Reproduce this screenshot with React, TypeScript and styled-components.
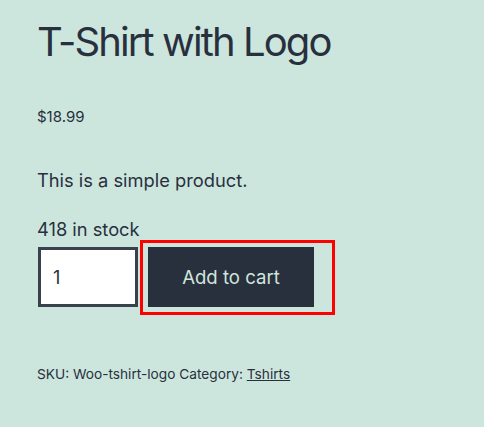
import React from "react";
import styled, { createGlobalStyle } from "styled-components";

const Global = createGlobalStyle`
  html, body { margin: 0; padding: 0; background: #cde6dd; }
  body { font-family: Inter, "Noto Sans", sans-serif; color: #28303d; }
`;

const Page = styled.main`
  padding: 16px 37px 40px;
  display: flex;
  flex-direction: column;
  align-items: flex-start;
`;

const Title = styled.h1`
  margin: 0;
  font-size: 40px;
  font-weight: 400;
  line-height: 52px;
  letter-spacing: -1.9px;
`;

const Price = styled.p`
  margin: 39px 0 0;
  font-size: 15px;
  line-height: 20px;
`;

const Desc = styled.p`
  margin: 40px 0 0;
  font-size: 18.3px;
  line-height: 26px;
`;

const Stock = styled.p`
  margin: 26px 0 0;
  font-size: 18.3px;
  line-height: 21px;
`;

const CartForm = styled.form`
  display: flex;
  align-items: flex-start;
`;

const Qty = styled.input`
  box-sizing: border-box;
  width: 100px;
  height: 60px;
  margin: 7px 0 0 1px;
  border: 3px solid #39414d;
  background: #fff;
  padding: 0 12px;
  font-family: inherit;
  font-size: 18px;
  color: #28303d;
  outline: none;
`;

const Highlight = styled.div`
  margin-left: 2px;
  border: 3px solid #ff0000;
  padding: 4px 18px 5px 5px;
`;

const CartButton = styled.button`
  box-sizing: border-box;
  width: 166px;
  height: 60px;
  border: none;
  background: #28303d;
  color: #d1e4dd;
  font-family: inherit;
  font-size: 18.6px;
  cursor: pointer;
`;

const Meta = styled.div`
  margin-top: 49px;
  font-size: 13.7px;
  line-height: 20px;
`;

const Link = styled.a`
  color: #28303d;
  text-decoration: underline;
`;

export default function App() {
  return (
    <>
      <Global />
      <Page>
        <Title>T-Shirt with Logo</Title>
        <Price>$18.99</Price>
        <Desc>This is a simple product.</Desc>
        <Stock>418 in stock</Stock>
        <CartForm onSubmit={(e) => e.preventDefault()}>
          <Qty type="text" defaultValue="1" />
          <Highlight>
            <CartButton type="submit">Add to cart</CartButton>
          </Highlight>
        </CartForm>
        <Meta>
          SKU: Woo-tshirt-logo Category: <Link href="#">Tshirts</Link>
        </Meta>
      </Page>
    </>
  );
}
